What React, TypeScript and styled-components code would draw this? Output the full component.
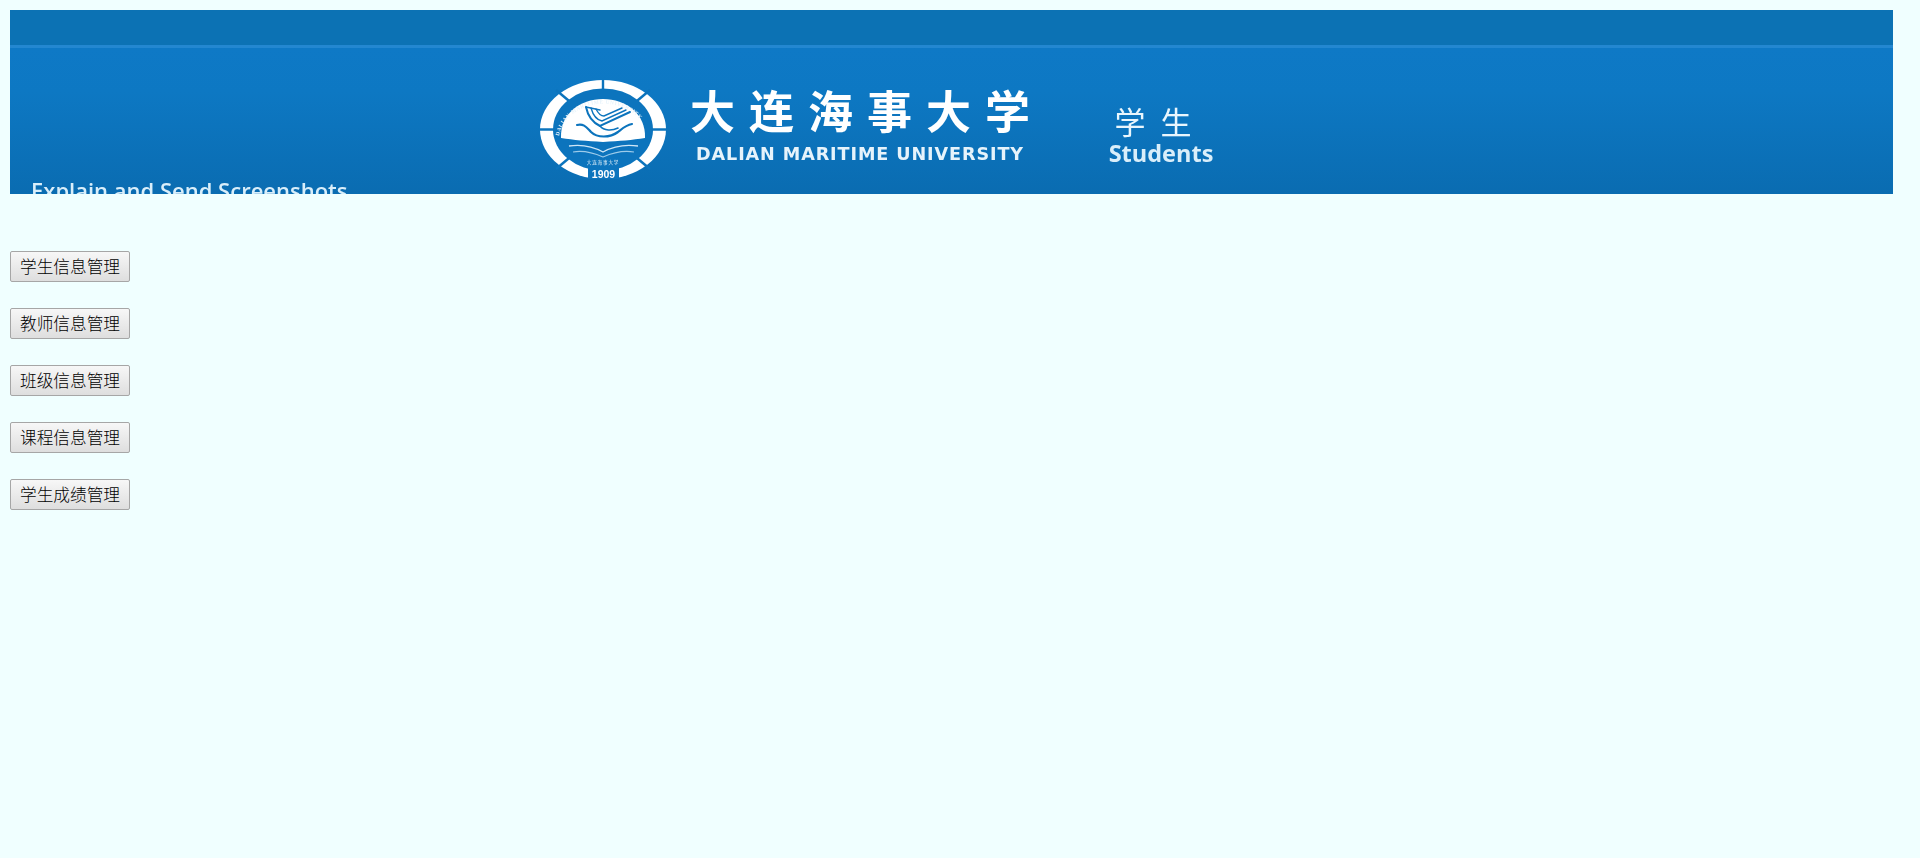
import React from "react";
import styled, { createGlobalStyle } from "styled-components";

const Global = createGlobalStyle`
  html, body { margin: 0; padding: 0; height: 100%; overflow: hidden; }
  body { background: #f0ffff; font-family: "Liberation Sans", "Noto Sans CJK SC", sans-serif; }
`;

const Page = styled.div`
  padding: 10px;
`;

const Banner = styled.header`
  width: 1883px;
  height: 184px;
  display: flex;
  flex-direction: column;
  overflow: hidden;
  color: #eef8fd;
`;

const TopStrip = styled.div`
  height: 35px;
  flex: none;
  background: #0c72b4;
  border-bottom: 3px solid #2387d0;
`;

const BannerBody = styled.div`
  flex: 1;
  min-height: 0;
  display: flex;
  padding-left: 21px;
  background: linear-gradient(#0e79c6 0%, #0d78c3 30%, #0a6cb1 100%);
`;

const Caption = styled.div`
  flex: none;
  width: 509px;
  padding-top: 129px;
  font: 600 22px/26px "Open Sans", sans-serif;
  white-space: nowrap;
  color: #d9eefa;
  filter: blur(0.5px);
`;

const Crest = styled.svg`
  flex: none;
  width: 127px;
  height: 99px;
  margin-top: 32px;
  filter: blur(0.4px);
`;

const Wordmark = styled.div`
  flex: none;
  width: 418px;
  margin-left: 23px;
  padding-top: 33px;
  filter: blur(0.5px);
`;

const Title = styled.div`
  font: 700 45px/58px "Noto Sans CJK SC", sans-serif;
  letter-spacing: 14px;
  white-space: nowrap;
  color: #fff;
`;

const EnglishName = styled.div`
  margin: 4px 0 0 6px;
  font: 700 17.6px/22px "DejaVu Sans", sans-serif;
  letter-spacing: 0.9px;
  white-space: nowrap;
  color: #e6f3fb;
`;

const Role = styled.div`
  flex: none;
  width: 106px;
  padding-top: 57px;
  text-align: center;
  filter: blur(0.5px);
`;

const RoleName = styled.div`
  font: 400 31px/32px "Noto Sans CJK SC", sans-serif;
  letter-spacing: 15px;
  margin-right: 1px;
  white-space: nowrap;
  color: #e9f6fd;
`;

const RoleEnglish = styled.div`
  margin-top: 3px;
  font: 700 23.5px/26px "Open Sans", sans-serif;
  color: #d9eefa;
`;

const Menu = styled.nav`
  display: flex;
  flex-direction: column;
  align-items: flex-start;
  gap: 26px;
  margin-top: 57px;
`;

const MenuButton = styled.button`
  width: 120px;
  height: 31px;
  padding: 0;
  box-sizing: border-box;
  border: 1px solid #a6a6a6;
  border-radius: 2px;
  background: linear-gradient(#f7f7f7, #dedede);
  color: #000;
  font: 300 16.67px/1 "Noto Sans CJK SC", sans-serif;
  cursor: pointer;
`;

const items = ["学生信息管理", "教师信息管理", "班级信息管理", "课程信息管理", "学生成绩管理"];

function Logo() {
  const gaps: [number, number, number, number][] = [
    [63, 49.5, 63, 0],
    [63, 49.5, 110, 10],
    [63, 49.5, 110, 89],
    [63, 49.5, 16, 10],
    [63, 49.5, 16, 89],
    [63, 49.5, 0, 49.5],
    [63, 49.5, 126, 49.5],
  ];
  return (
    <Crest viewBox="0 0 127 99" aria-label="校徽">
      <defs>
        <path id="crest-arc" d="M19 56 A45 38 0 0 1 108 56" />
      </defs>
      <ellipse cx="63" cy="49.5" rx="63" ry="49.5" fill="#fff" />
      {gaps.map(([x1, y1, x2, y2], i) => (
        <line key={i} x1={x1} y1={y1} x2={x2} y2={y2} stroke="#0c74bd" strokeWidth="2.4" />
      ))}
      <ellipse cx="63" cy="49.5" rx="50" ry="41" fill="#0c74bd" />
      <path d="M21 58 C20 34 40 19 63 19 C86 19 106 34 105 58 C92 60 80 61 63 62 C46 61 34 60 21 58 Z" fill="#fff" />
      <text fontSize="5.4" fontWeight="700" fill="#e8f4fb" fontFamily="Liberation Serif, serif" letterSpacing="0.5">
        <textPath href="#crest-arc">DALIAN MARITIME UNIVERSITY</textPath>
      </text>
      <g stroke="#0c74bd" fill="none" strokeLinecap="round">
        <path d="M46 27 C48 37 54 43 60 46 L90 32" strokeWidth="2" />
        <path d="M51 28 C53 35 57 40 62 41 L86 30" strokeWidth="1.4" />
        <path d="M56 29 C58 33 60 36 64 36 L82 28" strokeWidth="1.4" />
        <path d="M46 27 L60 30" strokeWidth="1.4" />
        <path d="M37 45 C44 43 47 48 51 52 C57 58 70 58 78 52 C83 48 86 45 92 44" strokeWidth="2.2" />
        <path d="M60 46 C64 51 72 51 78 48" strokeWidth="1.6" />
      </g>
      <path d="M29 66 C42 64 54 67 63 72 C72 67 84 64 98 66" stroke="#cfe6f6" strokeWidth="1.3" fill="none" />
      <path d="M33 72 C44 70 54 73 63 77 C72 73 82 70 94 72" stroke="#9ccbea" strokeWidth="1.1" fill="none" />
      <text x="63" y="84" textAnchor="middle" fontSize="4.6" fill="#e4f2fa" fontFamily="Noto Sans CJK SC, sans-serif" letterSpacing="0.8">大连海事大学</text>
      <rect x="48" y="88" width="31" height="11" fill="#0c74bd" />
      <text x="63.5" y="98" textAnchor="middle" fontSize="10.5" fontWeight="700" fill="#fff" fontFamily="Liberation Sans, sans-serif">1909</text>
    </Crest>
  );
}

export default function App() {
  return (
    <Page>
      <Global />
      <Banner>
        <TopStrip />
        <BannerBody>
          <Caption>Explain and Send Screenshots</Caption>
          <Logo />
          <Wordmark>
            <Title>大连海事大学</Title>
            <EnglishName>DALIAN MARITIME UNIVERSITY</EnglishName>
          </Wordmark>
          <Role>
            <RoleName>学生</RoleName>
            <RoleEnglish>Students</RoleEnglish>
          </Role>
        </BannerBody>
      </Banner>
      <Menu>
        {items.map((t) => (
          <MenuButton key={t}>{t}</MenuButton>
        ))}
      </Menu>
    </Page>
  );
}
